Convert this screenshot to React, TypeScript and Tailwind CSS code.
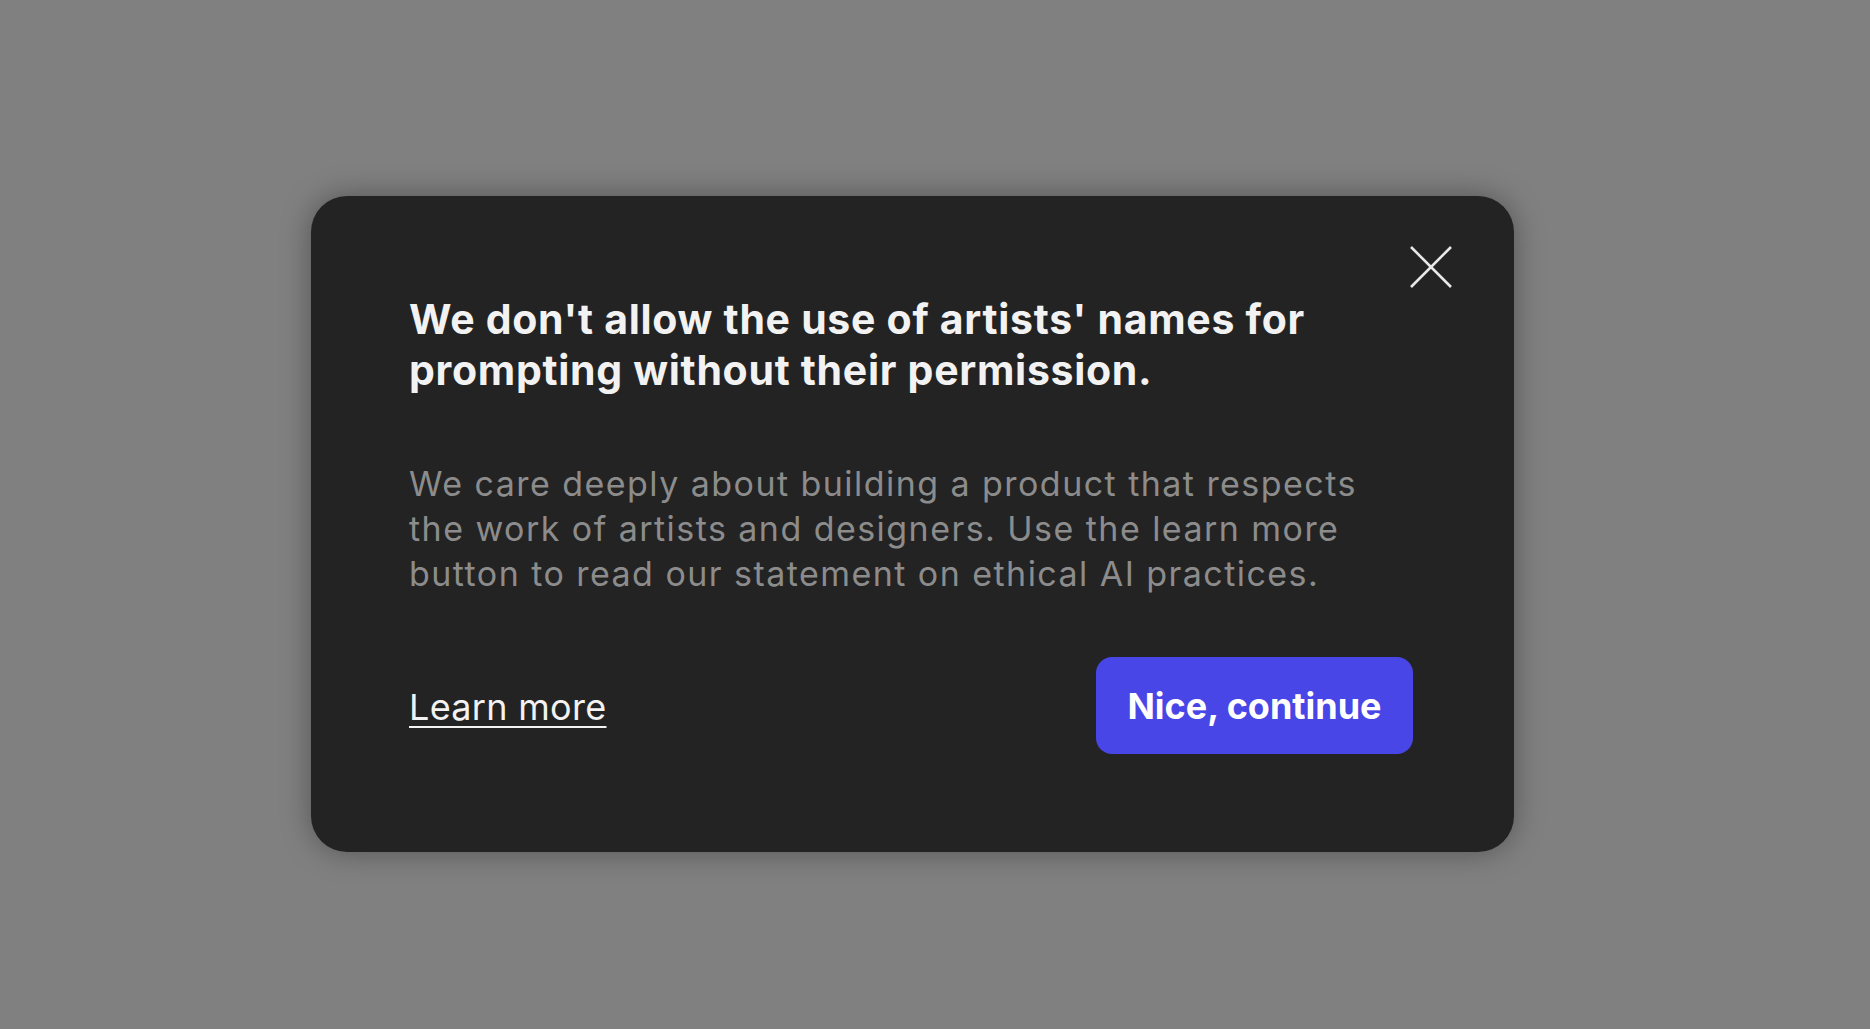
import React from "react";

export default function App() {
  return (
    <div
      className="w-[1870px] h-[1029px] bg-[#808080] pt-[196px] pl-[311px]"
      style={{ fontFamily: "Inter, 'Noto Sans', sans-serif" }}
    >
      <div className="relative w-[1203px] h-[656px] rounded-[36px] bg-[#232323] shadow-[0_0_30px_rgba(0,0,0,0.35)] p-[98px] flex flex-col">
        <button className="absolute right-[62px] top-[50px] w-[42px] h-[42px] flex items-center justify-center">
          <svg width="42" height="42" viewBox="0 0 42 42" fill="none">
            <path d="M1 1L41 41M41 1L1 41" stroke="#e8e8e8" strokeWidth="2.6" />
          </svg>
        </button>
        <h1 className="text-[41px] leading-[51px] font-bold text-[#f2f2f2] tracking-[0.7px] w-[930px]">
          We don't allow the use of artists' names for prompting without their permission.
        </h1>
        <p className="mt-[65px] text-[34px] leading-[45px] text-[#8c8c8c] tracking-[1.45px] w-[975px]">
          We care deeply about building a product that respects the work of artists and designers. Use the learn more button to read our statement on ethical AI practices.
        </p>
        <div className="mt-[61px] flex items-center justify-between">
          <a className="text-[36px] text-[#f2f2f2] tracking-[0.3px] underline underline-offset-[6px] decoration-2 mt-[3px]">
            Learn more
          </a>
          <button className="w-[317px] h-[97px] rounded-[16px] bg-[#4846E6] text-white text-[36px] font-bold mr-[3px]">
            Nice, continue
          </button>
        </div>
      </div>
    </div>
  );
}
